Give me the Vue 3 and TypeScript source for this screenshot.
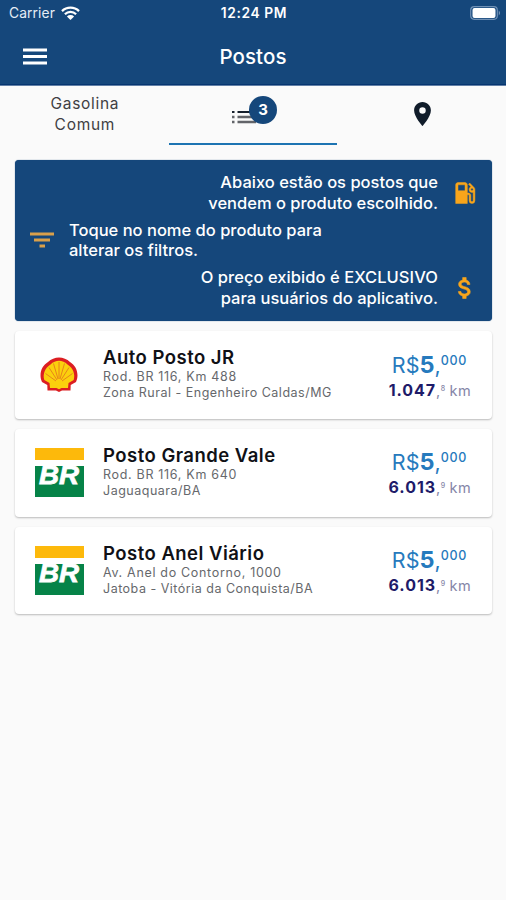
<script setup lang="ts">
interface Station {
  name: string
  address: string
  city: string
  brand: 'shell' | 'br'
  distance: string
  fraction: string
}

const stations: Station[] = [
  { name: 'Auto Posto JR', address: 'Rod. BR 116, Km 488', city: 'Zona Rural - Engenheiro Caldas/MG', brand: 'shell', distance: '1.047', fraction: '8' },
  { name: 'Posto Grande Vale', address: 'Rod. BR 116, Km 640', city: 'Jaguaquara/BA', brand: 'br', distance: '6.013', fraction: '9' },
  { name: 'Posto Anel Viário', address: 'Av. Anel do Contorno, 1000', city: 'Jatoba - Vitória da Conquista/BA', brand: 'br', distance: '6.013', fraction: '9' },
]
</script>

<template>
  <div class="screen">
    <header class="header">
      <div class="status">
        <div class="carrier">
          <span>Carrier</span>
          <svg class="wifi" viewBox="0 0 19 14">
            <path d="M1 5.1a12.2 12.2 0 0 1 17 0M3.9 8.2a8 8 0 0 1 11.2 0" fill="none" stroke="#fff" stroke-width="2.3" />
            <path d="M5.9 10.4a5.1 5.1 0 0 1 7.2 0L9.5 14z" fill="#fff" />
          </svg>
        </div>
        <div class="clock">12:24 PM</div>
        <div class="power">
          <svg class="battery" viewBox="0 0 31 14">
            <rect x=".7" y=".7" width="26.6" height="12.6" rx="3.5" fill="none" stroke="#6f90b5" stroke-width="1.2" />
            <rect x="2.5" y="2" width="23" height="10" rx="2" fill="#fff" />
            <path d="M28.8 4.5q2 2.5 0 5z" fill="#8fa9c7" />
          </svg>
        </div>
      </div>
      <div class="bar">
        <svg class="menu" viewBox="0 0 24 17"><path d="M0 2h24M0 8.5h24M0 15h24" stroke="#fff" stroke-width="2.9" /></svg>
        <h1>Postos</h1>
      </div>
    </header>

    <nav class="tabs">
      <div class="tab product">Gasolina<br />Comum</div>
      <div class="tab active">
        <div class="list-wrap">
          <svg class="list" viewBox="0 0 24 14">
            <path d="M0 2h2.5M5.5 2H24" stroke="#16202c" stroke-width="2" />
            <path d="M0 7h2.5M5.5 7H24M0 12h2.5M5.5 12H24" stroke="#626469" stroke-width="2.3" />
          </svg>
          <span class="badge">3</span>
        </div>
      </div>
      <div class="tab map">
        <svg class="pin" viewBox="5 2 14 20"><path fill="#101c2a" d="M12 2C8.1 2 5 5.1 5 9c0 5.3 7 13 7 13s7-7.7 7-13c0-3.9-3.1-7-7-7zm0 9.7a2.7 2.7 0 1 1 0-5.4 2.7 2.7 0 0 1 0 5.4z" /></svg>
      </div>
    </nav>

    <main>
      <section class="notice">
        <div class="hint right">
          <p>Abaixo estão os postos que<br />vendem o produto escolhido.</p>
          <svg class="icon fuel" viewBox="0 0 24 24"><path fill="#f8a51b" stroke="#f8a51b" stroke-width=".4" d="M19.77 7.23l.01-.01-3.72-3.72L15 4.56l2.11 2.11c-.94.36-1.61 1.26-1.61 2.33a2.5 2.5 0 0 0 2.5 2.5c.36 0 .69-.08 1-.21v7.21c0 .55-.45 1-1 1s-1-.45-1-1V14c0-1.1-.9-2-2-2h-1V5c0-1.1-.9-2-2-2H6c-1.1 0-2 .9-2 2v16h10v-7.5h1.5v5a2.5 2.5 0 0 0 5 0V9c0-.69-.28-1.32-.73-1.77zM12 10H6V5h6v5zm6 0c-.55 0-1-.45-1-1s.45-1 1-1 1 .45 1 1-.45 1-1 1z" /></svg>
        </div>
        <div class="hint left">
          <svg class="icon filter" viewBox="0 0 24 16"><path d="M0 2h24M4 8h16M9.5 14h5.5" stroke="#d9a04b" stroke-width="2.9" /></svg>
          <p>Toque no nome do produto para<br />alterar os filtros.</p>
        </div>
        <div class="hint right">
          <p><span class="exclusive">O preço exibido é EXCLUSIVO</span><br />para usuários do aplicativo.</p>
          <svg class="icon" viewBox="0 0 24 24"><path fill="#f8a51b" stroke="#f8a51b" stroke-width=".5" d="M11.8 10.9c-2.27-.59-3-1.2-3-2.15 0-1.09 1.01-1.85 2.7-1.85 1.78 0 2.44.85 2.5 2.1h2.21c-.07-1.72-1.12-3.3-3.21-3.81V3h-3v2.16c-1.94.42-3.5 1.68-3.5 3.61 0 2.31 1.91 3.46 4.7 4.13 2.5.6 3 1.48 3 2.41 0 .69-.49 1.79-2.7 1.79-2.06 0-2.87-.92-2.98-2.1h-2.2c.12 2.19 1.76 3.42 3.68 3.83V21h3v-2.15c1.95-.37 3.5-1.5 3.5-3.55 0-2.84-2.43-3.81-4.7-4.4z" /></svg>
        </div>
      </section>

      <article v-for="s in stations" :key="s.name" class="card">
        <div class="logo">
          <svg v-if="s.brand === 'shell'" class="shell" viewBox="0 0 38 35">
            <path d="M7.5 33.5 7.3 28 2 25C-1.5 17 1.5 9 8 5c6-6 16-6 22 0 6.5 4 9.5 12 6 20l-5.3 3-.2 5.5H22L19 35l-3-1.5z" fill="#dc1e22" />
            <path d="M10 31 9.5 26 4.3 23C2.5 17 5 11 10.5 7.5c5-5 12-5 17 0C33 11 35.5 17 33.7 23L28.5 26l-.5 5h-6.5L19 32.2 16.5 31z" fill="#fbd00d" />
            <path d="M16 24 5.5 16.5M17 23 9 10.5M18 22 13.5 6.5M19 22V5M20 22 24.5 6.5M21 23l8-12.5M22 24l10.5-7.5" stroke="#e57a1c" stroke-width=".9" fill="none" />
          </svg>
          <svg v-else class="br" viewBox="0 0 49 49">
            <path d="M0 0h49v12H0z" fill="#fdb90b" />
            <path d="M0 18h49v31H0z" fill="#068348" />
            <text x="4" y="36" textLength="40" lengthAdjust="spacingAndGlyphs">BR</text>
          </svg>
        </div>
        <div class="info">
          <h2>{{ s.name }}</h2>
          <p class="address">{{ s.address }}</p>
          <p>{{ s.city }}</p>
        </div>
        <div class="figures">
          <div class="price">R$<b>5</b>,<span class="sup">000</span></div>
          <div class="distance"><b>{{ s.distance }}</b>,<span class="sup">{{ s.fraction }}</span> km</div>
        </div>
      </article>
    </main>
  </div>
</template>

<style>
body { background: #fafafa; }
</style>

<style scoped>
* { box-sizing: border-box; }
h1, h2, p { margin: 0; }
svg { display: block; flex: none; }
.screen { width: 506px; height: 900px; background: #fafafa; font-family: Inter, "Liberation Sans", sans-serif; overflow: hidden; }
.header { height: 86px; background: #15477b; border-bottom: 1px solid #6280a6; box-shadow: inset 0 -1px #063570; color: #fff; }
.status { height: 26px; display: grid; grid-template-columns: 1fr auto 1fr; align-items: center; padding: 0 5px 0 9px; }
.carrier { display: flex; align-items: center; gap: 6px; font-size: 13.8px; letter-spacing: .1px; color: #e5edf6; }
.wifi { width: 19px; height: 14px; }
.clock { font-size: 13.8px; font-weight: 600; letter-spacing: .6px; margin-left: -2px; }
.power { display: flex; justify-content: flex-end; }
.battery { width: 31px; height: 14px; }
.bar { height: 60px; display: grid; grid-template-columns: 1fr auto 1fr; align-items: center; padding: 0 23px; }
.menu { width: 24px; height: 17px; }
h1 { font-size: 20.5px; line-height: 28px; font-weight: 500; letter-spacing: .1px; padding-top: 1px; }
.tabs { height: 59px; display: grid; grid-template-columns: repeat(3, 1fr); }
.tab { display: flex; justify-content: center; align-items: center; border-bottom: 2px solid transparent; }
.tab.active { border-color: #1d74b2; }
.product { font-size: 15.5px; line-height: 21px; letter-spacing: .7px; color: #3f4043; text-align: center; padding: 0 0 1px 1px; }
.map { padding: 0 0 2px 2px; }
.list-wrap { position: relative; width: 45px; height: 28px; margin: -10px 0 0 3px; padding-top: 14px; }
.list { width: 24px; height: 14px; }
.badge { position: absolute; right: 0; top: 0; width: 28px; height: 28px; border-radius: 50%; background: #15477b; color: #fff; font-size: 15px; font-weight: 700; line-height: 28px; text-align: center; }
.pin { width: 17px; height: 24px; }
main { padding: 15px 14px 0 15px; }
.notice { height: 161px; background: #15477b; border-radius: 4px; padding: 12px 15px 0; box-shadow: 0 0 1px #15477b; color: #fff; display: flex; flex-direction: column; gap: 6px; }
.hint { display: flex; align-items: center; font-size: 16.5px; line-height: 20.8px; font-weight: 500; height: 41.6px; white-space: nowrap; }
.right { justify-content: flex-end; text-align: right; gap: 13px; }
.left { gap: 15px; }
.exclusive { letter-spacing: .05px; }
.icon { width: 28px; height: 28px; }
.right .icon { margin-right: -2px; }
.hint .filter { width: 24px; height: 16px; }
.card { margin-top: 10.4px; height: 87.4px; display: flex; align-items: center; background: #fff; border-radius: 4px; box-shadow: 0 1px 2px rgba(0,0,0,.26); padding: 1px 21px 0 20px; }
.logo { width: 49px; display: flex; justify-content: center; }
.shell { width: 38px; height: 35px; margin: 0 2px 3px 0; }
.br { width: 49px; height: 49px; margin-bottom: 1px; }
.br text { fill: #fff; font-family: "Liberation Sans", sans-serif; font-size: 26px; font-weight: 700; font-style: italic; stroke: #fff; stroke-width: .8; }
.info { margin: 0 0 4px 19px; flex: 1; white-space: nowrap; }
h2 { font-size: 18.5px; font-weight: 600; line-height: 23px; letter-spacing: .48px; color: #101116; }
.info p { font-size: 12.5px; line-height: 16px; letter-spacing: .5px; color: #66686c; }
.info .address { letter-spacing: .68px; }
.figures { text-align: right; white-space: nowrap; padding-top: 1px; }
.price { color: #267abd; font-size: 21.5px; line-height: 27px; padding-right: 4px; }
.price b { font-weight: 700; font-size: 23.5px; }
.distance { color: #8585a7; font-size: 14.5px; line-height: 22px; letter-spacing: .4px; }
.distance b { color: #1e1b69; font-size: 16px; font-weight: 700; letter-spacing: .95px; }
.sup { display: inline-block; line-height: 1; transform: translateY(-8px); font-size: 12.5px; font-weight: 500; letter-spacing: .7px; }
.distance .sup { font-size: 7px; transform: translateY(-5px); letter-spacing: 0; }
</style>
